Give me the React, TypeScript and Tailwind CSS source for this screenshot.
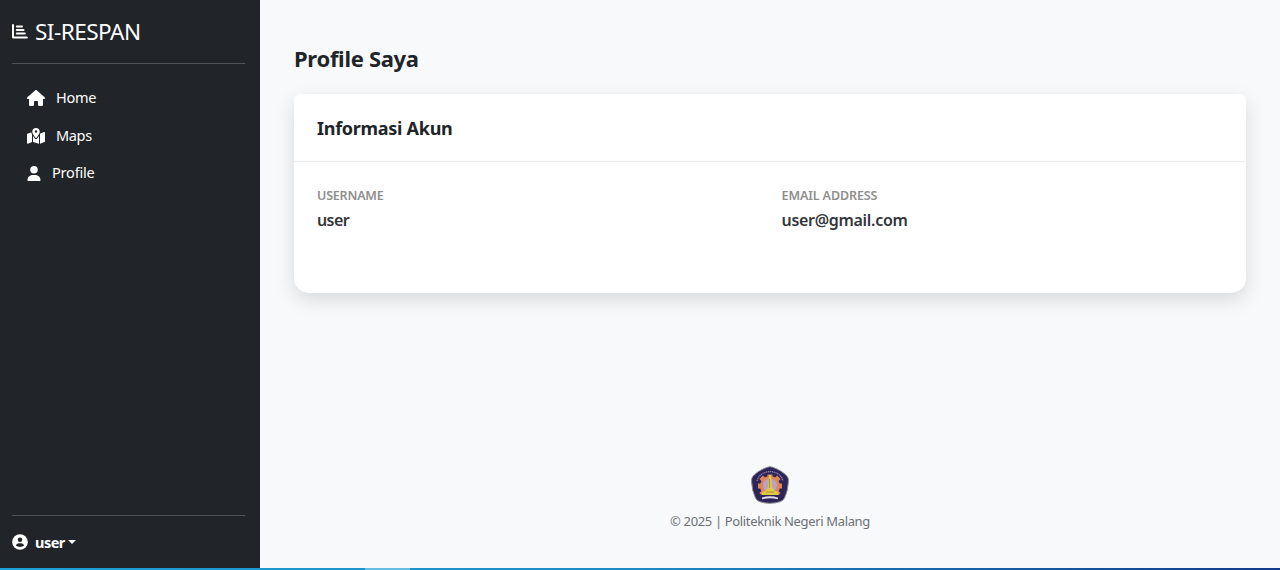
import type { ReactNode } from "react";
import { FaHouse, FaMapLocationDot, FaUser } from "react-icons/fa6";

function NavItem({ icon, label, labelClass }: { icon: ReactNode; label: string; labelClass: string }) {
  return (
    <li>
      <a href="#" className="flex h-[37.5px] items-center px-[15px] text-[14.5px] text-white">
        {icon}
        <span className={labelClass}>{label}</span>
      </a>
    </li>
  );
}

function Field({ label, value, labelClass, valueClass }: { label: string; value: string; labelClass: string; valueClass: string }) {
  return (
    <div className="flex-1">
      <div className={`text-[12.5px] leading-5 font-semibold text-[#8e8e8e] ${labelClass}`}>{label}</div>
      <div className={`mt-px text-[16px] leading-[26px] font-semibold text-[#33363a] ${valueClass}`}>{value}</div>
    </div>
  );
}

function ChartIcon() {
  return (
    <svg viewBox="0 0 16 15" className="h-[15px] w-4" fill="none" stroke="currentColor" strokeWidth="2" strokeLinecap="round" strokeLinejoin="round">
      <path d="M1 1v12q0 .5.500.5H14.800" />
      <path d="M4.800 2.500h5.200M4.800 6h6.700M4.800 9.500h8" />
    </svg>
  );
}

function AccountIcon() {
  return (
    <svg viewBox="0 0 16 16" className="h-4 w-4">
      <circle cx="8" cy="8" r="7.8" fill="white" />
      <circle cx="8" cy="5.800" r="2.300" fill="#212529" />
      <path d="M3.800 11.600C4.300 9.800 6 9.200 8 9.200s3.700.6 4.200 2.400Q10.500 13 8 13t-4.200-1.400Z" fill="#212529" />
    </svg>
  );
}

function Crest() {
  return (
    <svg viewBox="0 0 38 38" className="h-[38px] w-[38px]">
      <path d="M16.500 1.200Q19 .2 21.500 1.200Q31 4.500 36.300 10.500Q37.700 12.500 37.400 15.500Q37 25 33.500 32Q32.300 34.500 29.500 35.600Q19 39 8.500 35.600Q5.700 34.500 4.500 32Q1 25 .600 15.500Q.3 12.500 1.700 10.500Q7 4.500 16.500 1.200Z" fill="#2d2458" stroke="#8d8995" strokeWidth="1" />
      <path d="M6 15C9 2.500 29 2.500 32 15" fill="none" stroke="#9189ab" strokeWidth="1.300" strokeDasharray="1.200 .7" />
      <g fill="#df8657">
        <circle cx="19" cy="20" r="10" />
        <path d="M16.500 8.500h5v22h-5zM7 17.500h24v5H7z" />
        <path d="M16.500 7.500h5v25h-5z" transform="rotate(45 19 20)" />
        <path d="M16.500 7.500h5v25h-5z" transform="rotate(-45 19 20)" />
      </g>
      <circle cx="19" cy="19.500" r="7" fill="#bda3bd" />
      <path d="M18.200 9h1.800l1.200 13 3 3 3 1v3H11v-3l3-1 3-3z" fill="#ddca42" />
      <path d="M18.500 13v9M15 26h8" stroke="#927c26" strokeWidth=".7" />
      <path d="M9 29h20l-1 4H10z" fill="#2d2458" />
      <path d="M11 32.500q8-2.500 16 0" fill="none" stroke="#e4e0e5" strokeWidth="1.800" />
    </svg>
  );
}

export default function App() {
  return (
    <div className="flex h-[570px] w-full flex-col overflow-hidden bg-[#f8f9fb] font-['Noto_Sans','Open_Sans',sans-serif] text-[#212529]">
      <div className="flex min-h-0 flex-1">
        <aside className="flex w-[260px] shrink-0 flex-col bg-[#212529] px-3 text-white">
          <div className="flex h-[63px] items-center">
            <ChartIcon />
            <span className="mt-px ml-[7px] text-[22.5px] tracking-[-0.5px]">SI-RESPAN</span>
          </div>
          <div className="mr-[3px] border-t border-[#505357]" />
          <ul className="mt-4">
            <NavItem icon={<FaHouse className="-mt-px h-4 w-[18px]" />} label="Home" labelClass="-mt-px ml-[11px] tracking-[-0.25px]" />
            <NavItem icon={<FaMapLocationDot className="-mt-px h-4 w-[18px]" />} label="Maps" labelClass="ml-[11px] tracking-[-0.35px]" />
            <NavItem icon={<FaUser className="-mt-px h-[15px] w-[14px]" />} label="Profile" labelClass="-mt-px ml-[11px] tracking-[-0.2px]" />
          </ul>
          <div className="mt-auto mr-[3px] border-t border-[#505357]" />
          <button className="flex h-[52px] items-center text-[14.5px] font-bold">
            <AccountIcon />
            <span className="mt-[2px] ml-[7px] tracking-[-0.5px]">user</span>
            <span className="ml-[3px] border-x-4 border-t-4 border-x-transparent border-t-white" />
          </button>
        </aside>
        <main className="flex flex-1 flex-col px-[34px]">
          <h1 className="mt-[41px] text-[22px] leading-[34px] font-bold tracking-[-0.3px]">Profile Saya</h1>
          <section className="mt-[19px] h-[199px] rounded-t-[6px] rounded-b-[15px] bg-white shadow-[0_7px_20px_rgba(0,0,0,0.13)]">
            <div className="flex h-[68px] items-center border-b border-[#ebecee] px-[23px]">
              <h2 className="mt-[2px] text-[18px] font-bold tracking-[-0.28px]">Informasi Akun</h2>
            </div>
            <div className="flex gap-[23px] px-[23px] pt-6">
              <Field label="USERNAME" value="user" labelClass="tracking-[-0.2px]" valueClass="tracking-[-0.6px]" />
              <Field label="EMAIL ADDRESS" value="user@gmail.com" labelClass="tracking-[-0.1px]" valueClass="tracking-[-0.3px]" />
            </div>
          </section>
          <footer className="mt-auto flex flex-col items-center pb-[37px]">
            <Crest />
            <p className="mt-[7px] text-[13px] leading-5 tracking-[-0.35px] text-[#6c7075]">© 2025 | Politeknik Negeri Malang</p>
          </footer>
        </main>
      </div>
      <div className="flex h-[2px] shrink-0 bg-linear-to-r from-[#1ba1d5] via-[#1c8ac5] to-[#133b8b]">
        <div className="ml-[365px] w-[45px] bg-[#65bde4]" />
      </div>
    </div>
  );
}
